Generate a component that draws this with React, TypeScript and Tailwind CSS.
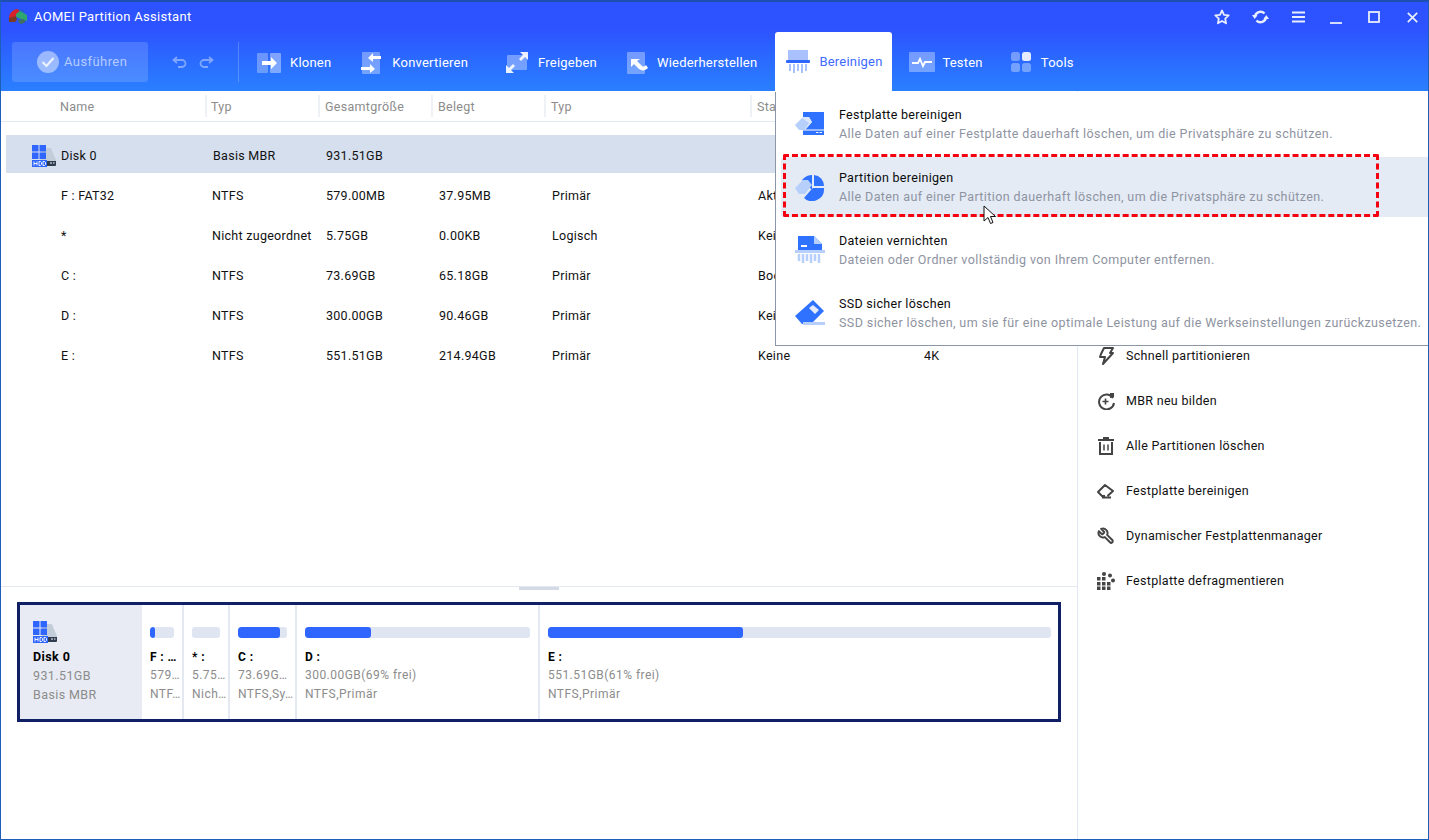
import type { ReactNode } from "react";

const COL = "grid grid-cols-[206px_113px_113px_113px_206px_166px_1fr]";
const ROW_COL = "grid grid-cols-[201px_113px_113px_113px_206px_166px_1fr]";

const ROWS = [
  ["F : FAT32", "NTFS", "579.00MB", "37.95MB", "Primär", "Aktiv", ""],
  ["*", "Nicht zugeordnet", "5.75GB", "0.00KB", "Logisch", "Keine", ""],
  ["C :", "NTFS", "73.69GB", "65.18GB", "Primär", "Boot", ""],
  ["D :", "NTFS", "300.00GB", "90.46GB", "Primär", "Keine", ""],
  ["E :", "NTFS", "551.51GB", "214.94GB", "Primär", "Keine", "4K"],
];

function Logo() {
  return (
    <svg width="20" height="18" viewBox="0 0 20 18">
      <path d="M1 9 C2 4 6 1 10 1 L12 4 L8 8 L2 11Z" fill="#d8232a" />
      <path d="M10 1 C13 1 16 2 17 5 L12 4Z" fill="#2563c9" />
      <path d="M8 6 L12 3 L19 7 L19 13 L13 11 L8 9Z" fill="#2fa86f" />
      <path d="M1 10 L8 8 L9 12 L7 14 L1 14Z" fill="#7c3a21" />
      <path d="M10 12 L15 11 L18 13 L14 16 L11 15Z" fill="#3f6f5e" />
    </svg>
  );
}

function WinIcon({ s = 22 }: { s?: number }) {
  return (
    <svg width={s + 2} height={s} viewBox="0 0 24 22" className="shrink-0">
      <path d="M9 3h8a3 3 0 0 1 3 3l4 9v1H9z" fill="#c3ccd9" />
      <path d="M11 16h13v4a1 1 0 0 1-1 1H11z" fill="#2f3b4e" />
      <path d="M18 18h2M21 18h1.500" stroke="#fff" strokeWidth="1" />
      <path d="M0 0h6.500v6.500H0zM7.500 0H14v6.500H7.500zM0 7.500h6.500V14H0zM7.500 7.500H14V14H7.500z" fill="#2f66ff" />
      <rect x="0" y="15" width="15" height="7" fill="#2f66ff" />
      <path d="M2 16.500v4M5 16.500v4M2 18.500h3M7 16.500v4h1.500l1-1v-2l-1-1zM11 16.500v4h1.500l1-1v-2l-1-1z" stroke="#fff" strokeWidth="0.9" fill="none" />
    </svg>
  );
}

function ToolBtn({ icon, label, className }: { icon: ReactNode; label: string; className: string }) {
  return (
    <div className={`flex items-center h-[59px] pt-[2px] shrink-0 ${className}`}>
      {icon}
      <span className="text-[13px] text-white tracking-[0.22px]">{label}</span>
    </div>
  );
}

function Sheet({ children, w = 24, mr = "mr-[9px]" }: { children: ReactNode; w?: number; mr?: string }) {
  return (
    <svg width={w} height="22" viewBox={`0 0 ${w} 22`} className={`${mr} shrink-0`}>
      {children}
    </svg>
  );
}

function MenuIcon({ kind }: { kind: number }) {
  if (kind === 0)
    return (
      <svg width="32" height="28" viewBox="0 0 32 28">
        <path d="M9 2h21v23H9z" fill="#2f72ff" />
        <path d="M9 20h21" stroke="#fff" strokeWidth="1" />
        <path d="M22 22.500h2.500M25.500 22.500h2.500" stroke="#fff" strokeWidth="1" />
        <path d="M1 15 L9 7 L15 7 L18 12 L11 20 H5Z" fill="#b6d0fb" />
        <path d="M8 8 L15 13 L11 19 L11 20 L18 12 L15 7 L9 7Z" fill="#dbe7fd" />
      </svg>
    );
  if (kind === 1)
    return (
      <svg width="32" height="28" viewBox="0 0 32 28">
        <path d="M18 2a13 13 0 0 0-9 4l-1 1 10 10v-15z" fill="#2f72ff" />
        <path d="M20 2a11 11 0 0 1 10 11H20z" fill="#2f72ff" />
        <path d="M30 15a12 12 0 0 1-20 10l6-7 3-3z" fill="#2f72ff" />
        <path d="M1 15 L9 7 L14 7 L18 12 L11 21 H5Z" fill="#b6d0fb" />
      </svg>
    );
  if (kind === 2)
    return (
      <svg width="32" height="29" viewBox="0 0 32 29">
        <path d="M4 1h16l8 8v6H4z" fill="#2f72ff" />
        <path d="M20 1l8 8h-8z" fill="#b6d0fb" />
        <path d="M7 11h6" stroke="#fff" strokeWidth="2" />
        <rect x="1" y="15" width="30" height="3" fill="#b6d0fb" />
        <path d="M5 19v7M9 19v9M13 19v7M17 19v9M21 19v7M25 19v9" stroke="#b6d0fb" strokeWidth="2.500" />
      </svg>
    );
  return (
    <svg width="32" height="28" viewBox="0 0 32 28">
      <path d="M1 17 L19 1 L30 12 L17 25 H8Z" fill="#2f72ff" />
      <path d="M15 9 L19 6 L25 11 L21 15Z" fill="#e4ecfb" />
      <rect x="9" y="23" width="22" height="3" fill="#b6d0fb" />
    </svg>
  );
}

const MENU = [
  ["Festplatte bereinigen", "Alle Daten auf einer Festplatte dauerhaft löschen, um die Privatsphäre zu schützen."],
  ["Partition bereinigen", "Alle Daten auf einer Partition dauerhaft löschen, um die Privatsphäre zu schützen."],
  ["Dateien vernichten", "Dateien oder Ordner vollständig von Ihrem Computer entfernen."],
  ["SSD sicher löschen", "SSD sicher löschen, um sie für eine optimale Leistung auf die Werkseinstellungen zurückzusetzen."],
];

function SideIcon({ kind }: { kind: number }) {
  const p = { fill: "none", stroke: "#444", strokeWidth: 2 };
  return (
    <svg width="18" height="18" viewBox="0 0 18 18" className="shrink-0">
      {kind === 0 && <path d="M7 1h9l-3 5h3L6 17l2-7H3l1-3z" {...p} strokeLinejoin="round" />}
      {kind === 1 && (
        <>
          <path d="M16 6a7.500 7.500 0 1 0 1 5" {...p} />
          <path d="M5.500 9.500h6M8.500 6.500v6" {...p} strokeWidth={1.6} />
          <path d="M13 1l4 0 0 4-4 1z" fill="#444" />
        </>
      )}
      {kind === 2 && (
        <>
          <path d="M1 3h16" {...p} />
          <path d="M6 1h6" {...p} />
          <path d="M3 5v12h12V5" {...p} />
          <path d="M7 7.500v6M11 7.500v6" {...p} strokeWidth={1.5} />
        </>
      )}
      {kind === 3 && <path d="M8 14H5L1 10l7-7 8 6-5.500 5M5 15.500h9" {...p} strokeLinejoin="round" />}
      {kind === 4 && (
        <g transform="translate(18 0) scale(-0.75 0.75)">
          <path
            d="M14.700 6.300a1 1 0 0 0 0 1.400l1.600 1.600a1 1 0 0 0 1.400 0l3.770-3.770a6 6 0 0 1-7.940 7.940l-6.910 6.910a2.120 2.120 0 0 1-3-3l6.910-6.910a6 6 0 0 1 7.940-7.940l-3.760 3.760z"
            {...p}
            strokeWidth={2.600}
            strokeLinejoin="round"
          />
        </g>
      )}
      {kind === 5 && (
        <g fill="#444">
          {[
            [0, 5], [5, 5], [0, 10], [5, 10], [10, 10], [0, 14.500], [5, 14.500], [10, 14.500],
          ].map(([x, y]) => (
            <rect key={`${x}-${y}`} x={x} y={y} width="3.500" height="3.500" />
          ))}
          <circle cx="7" cy="2" r="2" />
          <circle cx="13" cy="3.500" r="2" />
          <circle cx="16" cy="8.500" r="2" />
        </g>
      )}
    </svg>
  );
}

const SIDE = [
  "Schnell partitionieren",
  "MBR neu bilden",
  "Alle Partitionen löschen",
  "Festplatte bereinigen",
  "Dynamischer Festplattenmanager",
  "Festplatte defragmentieren",
];

function Part({ w, bar, pl, name, size, kind, barW }: { w: string; bar: string; pl: string; name: string; size: string; kind: string; barW: string }) {
  return (
    <div className={`${w} ${pl} shrink-0 h-full border-r-2 border-[#e3e8f1] overflow-hidden last:border-r-0`}>
      <div className={`${barW} h-[11px] mt-[22px] rounded-[3px] bg-[#dfe6f2] overflow-hidden`}>
        <div className={`${bar} h-full rounded-[3px] bg-[#2f66ff]`} />
      </div>
      <div className="mt-[11px] text-[12px] leading-[16px] font-bold text-black tracking-[0.4px] whitespace-nowrap">{name}</div>
      <div className="mt-[2px] text-[12px] leading-[16px] text-[#8c8c8c] tracking-[0.46px] whitespace-nowrap">{size}</div>
      <div className="mt-[3px] text-[12px] leading-[16px] text-[#8c8c8c] tracking-[0.46px] whitespace-nowrap">{kind}</div>
    </div>
  );
}

export default function App() {
  return (
    <div className="relative w-[1429px] h-[840px] flex flex-col bg-white border border-[#1b5fb8] border-t-2 border-t-[#1d4fb0] overflow-hidden font-['Roboto',sans-serif] text-[12.500px] text-[#111]">
      <header className="h-[89px] shrink-0 bg-gradient-to-b from-[#2d52ff] from-30% to-[#2b7fff]">
        <div className="flex items-center h-[30px] pl-[7px]">
          <Logo />
          <span className="ml-[6px] text-[13px] text-white tracking-[0.3px]">AOMEI Partition Assistant</span>
          <div className="ml-auto flex items-center text-white">
            <svg width="16" height="16" viewBox="0 0 16 16" className="mr-[22px]"><path d="M8 1.500l2 4.300 4.700.6-3.500 3.200.9 4.700L8 12l-4.100 2.300.9-4.700L1.300 6.400 6 5.800z" fill="none" stroke="#e8eeff" strokeWidth="1.800" strokeLinejoin="round" /></svg>
            <svg width="17" height="16" viewBox="0 0 17 16" className="mr-[23px]"><path d="M3 8a5.500 5.500 0 0 1 9.500-3.500M14 8a5.500 5.500 0 0 1-9.500 3.500" fill="none" stroke="#e8eeff" strokeWidth="2.400" /><path d="M0 6h5.500L2.700 10zM17 10h-5.500l2.800-4z" fill="#e8eeff" /></svg>
            <svg width="13" height="12" viewBox="0 0 13 12" className="mr-[25px]"><path d="M0 1.500h13M0 6h13M0 10.500h13" stroke="#e8eeff" strokeWidth="1.800" /></svg>
            <svg width="12" height="14" viewBox="0 0 12 14" className="mr-[26px]"><path d="M0 13h12" stroke="#e8eeff" strokeWidth="1.800" /></svg>
            <svg width="12" height="12" viewBox="0 0 12 12" className="mr-[27px]"><rect x="1" y="1" width="10" height="10" fill="none" stroke="#e8eeff" strokeWidth="1.800" /></svg>
            <svg width="11" height="11" viewBox="0 0 11 11" className="mr-[10px]"><path d="M.800.800l9.400 9.400M10.200.800L.800 10.200" stroke="#e8eeff" strokeWidth="1.700" /></svg>
          </div>
        </div>
        <div className="flex items-center h-[59px] pl-[11px]">
          <div className="w-[136px] h-[40px] shrink-0 flex items-center pl-[25px] rounded-[3px] bg-white/15">
            <svg width="22" height="22" viewBox="0 0 22 22"><circle cx="11" cy="11" r="11" fill="#fff" fillOpacity="0.45" /><path d="M5.500 11l4 4 7-8" fill="none" stroke="#fff" strokeOpacity="0.8" strokeWidth="2.200" /></svg>
            <span className="ml-[5px] text-[13px] text-white/60 tracking-[0.42px]">Ausführen</span>
          </div>
          <svg width="16" height="12" viewBox="0 0 16 12" className="ml-[24px] shrink-0"><path d="M5 1L1.500 4 5 7M2 4h8a3.500 3.500 0 0 1 0 7H6" fill="none" stroke="#fff" strokeOpacity="0.4" strokeWidth="1.800" /></svg>
          <svg width="16" height="12" viewBox="0 0 16 12" className="ml-[10px] shrink-0"><path d="M11 1l3.500 3L11 7M14 4H6a3.500 3.500 0 0 0 0 7h4" fill="none" stroke="#fff" strokeOpacity="0.4" strokeWidth="1.800" /></svg>
          <div className="ml-[24px] w-px h-[40px] bg-white/20 shrink-0" />
          <ToolBtn
            className="ml-[18px]"
            label="Klonen"
            icon={
              <Sheet>
                <rect x="0" y="1" width="11" height="20" rx="1" fill="#fff" fillOpacity="0.3" />
                <rect x="13" y="1" width="11" height="20" rx="1" fill="#fff" fillOpacity="0.4" />
                <path d="M5 9h9V5l6 6-6 6v-4H5z" fill="#fff" />
              </Sheet>
            }
          />
          <ToolBtn
            className="ml-[30px]"
            label="Konvertieren"
            icon={
              <Sheet w={22}>
                <rect x="1" y="0" width="18" height="22" rx="1" fill="#fff" fillOpacity="0.35" />
                <path d="M20 4h-8V1L7 6l5 4V7h8zM0 15h9v-3l5 5-5 4v-3H0z" fill="#fff" />
              </Sheet>
            }
          />
          <ToolBtn
            className="ml-[38px]"
            label="Freigeben"
            icon={
              <Sheet w={23}>
                <rect x="1" y="3" width="20" height="15" rx="1" fill="#fff" fillOpacity="0.35" />
                <path d="M22 0v8l-3-3-4 4-2-2 4-4-3-3zM0 21v-8l3 3 4-4 2 2-4 4 3 3z" fill="#fff" fillOpacity="0.9" />
              </Sheet>
            }
          />
          <ToolBtn
            className="ml-[30px]"
            label="Wiederherstellen"
            icon={
              <Sheet w={21}>
                <rect x="0" y="0" width="18" height="22" rx="1" fill="#fff" fillOpacity="0.35" />
                <path d="M4 7v8l3-3 5 5c3 2 6 2 9-1l-2-3c-2 2-3 2-5 0l-4-4 3-2z" fill="#fff" />
              </Sheet>
            }
          />
          <div className="ml-[18px] w-[117px] h-[60px] self-start flex items-center pl-[11px] bg-white rounded-t-[3px] shrink-0">
            <svg width="24" height="23" viewBox="0 0 24 23" className="mr-[9px] shrink-0 -mt-[2px]">
              <rect x="2" y="0" width="20" height="10" fill="#a9c2ff" />
              <rect x="0" y="10" width="24" height="3" rx="1" fill="#2f66ff" />
              <path d="M4 14v7M8 14v9M12 14v7M16 14v9M20 14v7" stroke="#a9c2ff" strokeWidth="2" />
            </svg>
            <span className="text-[13px] text-[#3f6bff] tracking-[0.22px]">Bereinigen</span>
          </div>
          <ToolBtn
            className="ml-[17px]"
            label="Testen"
            icon={
              <Sheet w={26} mr="mr-[7px]">
                <rect x="0" y="0" width="26" height="20" rx="1" fill="#fff" fillOpacity="0.35" />
                <path d="M3 11h6l2-4 3 7 2-4h7" fill="none" stroke="#fff" strokeWidth="1.800" />
              </Sheet>
            }
          />
          <ToolBtn
            className="ml-[28px]"
            label="Tools"
            icon={
              <Sheet w={21}>
                <rect x="0" y="0" width="9" height="9" rx="2.500" fill="#fff" fillOpacity="0.35" />
                <rect x="11" y="0" width="9" height="9" rx="2.500" fill="#e6ecff" />
                <rect x="0" y="11" width="9" height="9" rx="2.500" fill="#fff" fillOpacity="0.35" />
                <rect x="11" y="11" width="9" height="9" rx="2.500" fill="#fff" fillOpacity="0.35" />
              </Sheet>
            }
          />
        </div>
      </header>

      <div className="flex flex-1 min-h-0">
        <main className="w-[1076px] shrink-0 flex flex-col">
          <div className={`${COL} h-[31px] border-b border-[#e3e8f1] pt-[4px] text-[#8c8c8c] tracking-[0.3px]`}>
            {["Name", "Typ", "Gesamtgröße", "Belegt", "Typ", "Status", ""].map((h, i) => (
              <div
                key={i}
                className={`h-[22px] pt-[2px] flex items-center ${
                  i === 0
                    ? "pl-[59px] border-r-2 border-[#eef1f6]"
                    : i === 1
                      ? "pl-[4px] border-r-2 border-[#eef1f6]"
                      : i < 6
                        ? "pl-[5px] border-r-2 border-[#eef1f6]"
                        : "pl-[5px]"
                }`}
              >
                {h}
              </div>
            ))}
          </div>
          <div className="flex-1 pt-[13px] pl-[5px]">
            <div className={`${ROW_COL} h-[38px] items-center bg-[#d5dfee] tracking-[0.28px]`}>
              <div className="flex items-center pl-[26px] pt-[4px]">
                <WinIcon />
                <span className="ml-[5px]">Disk 0</span>
              </div>
              <div className="pl-[6px] pt-[4px]">Basis MBR</div>
              <div className="pl-[6px] pt-[4px]">931.51GB</div>
            </div>
            <div className="pt-[3px]">
              {ROWS.map((r) => (
                <div key={r[0]} className={`${ROW_COL} h-[40px] items-center tracking-[0.28px]`}>
                  {r.map((c, i) => (
                    <div key={i} className={`whitespace-nowrap ${i === 0 ? "pl-[55px]" : i === 1 ? "pl-[5px]" : "pl-[6px]"}`}>
                      {c}
                    </div>
                  ))}
                </div>
              ))}
            </div>
          </div>
          <div className="relative h-[16px] border-t border-[#e3e8f1] shrink-0">
            <div className="absolute left-[518px] top-0 w-[40px] h-[3px] bg-[#d4dbe7]" />
          </div>
          <div className="h-[120px] ml-[16px] w-[1044px] flex border-[3px] border-[#101f66] shrink-0">
            <div className="w-[122px] shrink-0 bg-[#e8ebf3] pl-[13px] pt-[16px]">
              <WinIcon s={22} />
              <div className="mt-[6px] text-[12.500px] leading-[16px] font-bold text-black tracking-[0.4px]">Disk 0</div>
              <div className="mt-[3px] leading-[16px] text-[#8c8c8c] tracking-[0.4px]">931.51GB</div>
              <div className="mt-[3px] leading-[16px] text-[#8c8c8c] tracking-[0.4px]">Basis MBR</div>
            </div>
            <Part w="w-[42px]" pl="pl-[8px]" barW="w-[24px]" bar="w-[5px]" name="F : …" size="579…" kind="NTF…" />
            <Part w="w-[46px]" pl="pl-[8px]" barW="w-[28px]" bar="w-0" name="* :" size="5.75…" kind="Nich…" />
            <Part w="w-[67px]" pl="pl-[8px]" barW="w-[49px]" bar="w-[42px]" name="C :" size="73.69G…" kind="NTFS,Sy…" />
            <Part w="w-[243px]" pl="pl-[8px]" barW="w-[225px]" bar="w-[66px]" name="D :" size="300.00GB(69% frei)" kind="NTFS,Primär" />
            <Part w="w-[519px]" pl="pl-[8px]" barW="w-[503px]" bar="w-[195px]" name="E :" size="551.51GB(61% frei)" kind="NTFS,Primär" />
          </div>
          <div className="h-[117px] shrink-0" />
        </main>
        <aside className="flex-1 border-l border-[#dfe8f3] pl-[19px] pt-[256px] flex flex-col gap-[27px]">
          {SIDE.map((s, i) => (
            <div key={s} className="flex items-center h-[18px]">
              <SideIcon kind={i} />
              <span className="ml-[11px] tracking-[0.3px] whitespace-nowrap">{s}</span>
            </div>
          ))}
        </aside>
      </div>

      <div className="absolute left-[774px] top-[90px] right-0 h-[254px] bg-white border-l border-b border-[#8b97a8]">
        {MENU.map((m, i) => (
          <div
            key={m[0]}
            className={`flex items-center ${i === 1 ? "bg-[#e4ebf5] ml-[5px] pl-[13px] h-[60px] mt-[2px] mb-[1px] rounded-l-[3px]" : "h-[63px] pl-[18px]"}`}
          >
            <MenuIcon kind={i} />
            <div className="ml-[13px]">
              <div className="text-[12.500px] leading-[19px] text-[#0b0b0b] tracking-[0.3px]">{m[0]}</div>
              <div className="text-[12.500px] leading-[19px] text-[#8e93a1] tracking-[0.41px] whitespace-nowrap">{m[1]}</div>
            </div>
          </div>
        ))}
      </div>
      <div className="absolute left-[782px] top-[152px] w-[596px] h-[63px] border-[3px] border-dashed border-[#f4000f] rounded-[2px]" />
      <svg className="absolute left-[982px] top-[203px]" width="13" height="20" viewBox="0 0 13 20">
        <path d="M1 1v15l4-3.500 2.500 6 2.500-1-2.500-6h5z" fill="#fff" stroke="#111" strokeWidth="1" />
      </svg>
    </div>
  );
}
